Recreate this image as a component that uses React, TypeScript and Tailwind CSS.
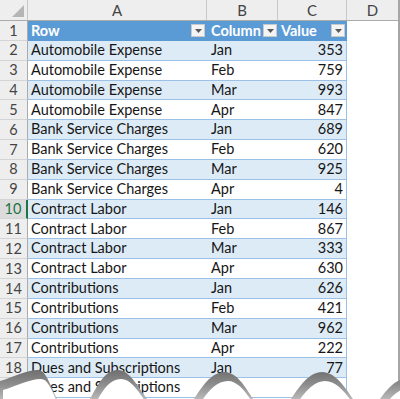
const rows: [string, string, number | null][] = [
  ["Automobile Expense", "Jan", 353],
  ["Automobile Expense", "Feb", 759],
  ["Automobile Expense", "Mar", 993],
  ["Automobile Expense", "Apr", 847],
  ["Bank Service Charges", "Jan", 689],
  ["Bank Service Charges", "Feb", 620],
  ["Bank Service Charges", "Mar", 925],
  ["Bank Service Charges", "Apr", 4],
  ["Contract Labor", "Jan", 146],
  ["Contract Labor", "Feb", 867],
  ["Contract Labor", "Mar", 333],
  ["Contract Labor", "Apr", 630],
  ["Contributions", "Jan", 626],
  ["Contributions", "Feb", 421],
  ["Contributions", "Mar", 962],
  ["Contributions", "Apr", 222],
  ["Dues and Subscriptions", "Jan", 77],
  ["Dues and Subscriptions", "Feb", null],
];

function FilterButton() {
  return (
    <span className="flex h-[13px] w-[14px] items-center justify-center border border-[#c9c9c9] bg-[#f4f4f4]">
      <svg width="7" height="4" viewBox="0 0 7 4">
        <path d="M0 0 L7 0 L3.5 4 Z" fill="#595959" />
      </svg>
    </span>
  );
}

function RowHeader({ n, active }: { n: number; active?: boolean }) {
  return (
    <div
      className={
        active
          ? "flex w-[28px] shrink-0 items-center justify-center border-r-2 border-b border-r-[#217346] border-b-[#d4d4d4] bg-[#dcdcdc] text-[#217346]"
          : "flex w-[28px] shrink-0 items-center justify-center border-r border-b border-r-[#ababab] border-b-[#d4d4d4] bg-[#eeeeee] text-[#444]"
      }
    >
      {n}
    </div>
  );
}

export default function App() {
  const wave =
    "M0,382 C14,378 26,371 38,371 C46,371 50,386 57,400 L90,400 C97,388 104,371 118,371 C129,371 137,386 147,400 L194,400 C202,388 211,373 225,373 C236,373 245,387 253,400 L291,400 C299,388 309,373 322,373 C335,373 345,388 353,400 L380,400 C387,390 393,384 400,381 L400,400 L0,400 Z";

  return (
    <div className="relative h-[399px] w-[400px] overflow-hidden bg-white font-['Lato',sans-serif] text-[14.5px] text-[#161616]">
      <div className="border-r-2 border-[#a6a6a6]">
        {/* column letters */}
        <div className="flex h-[21px] border-b border-[#ababab] bg-[#eeeeee] text-[15px] text-[#444]">
          <div className="relative w-[28px] shrink-0 border-r border-[#c8c8c8]">
            <svg className="absolute right-[3px] bottom-[3px]" width="12" height="12" viewBox="0 0 12 12">
              <path d="M12 0 L12 12 L0 12 Z" fill="#b5b5b5" />
            </svg>
          </div>
          <div className="flex w-[179px] shrink-0 items-center justify-center border-r border-[#c8c8c8]">A</div>
          <div className="flex w-[71px] shrink-0 items-center justify-center border-r border-[#c8c8c8]">B</div>
          <div className="flex w-[69px] shrink-0 items-center justify-center border-r border-[#c8c8c8]">C</div>
          <div className="flex flex-1 items-center justify-center">D</div>
        </div>

        {/* table header row */}
        <div className="flex h-[19.85px]">
          <RowHeader n={1} />
          <div className="flex w-[319px] shrink-0 bg-[#5b9bd5] font-bold text-white">
            <div className="flex w-[179px] shrink-0 items-center justify-between pr-[2px] pl-[3px]">
              <span>Row</span>
              <FilterButton />
            </div>
            <div className="flex w-[71px] shrink-0 items-center justify-between pr-[1px] pl-[4px]">
              <span>Column</span>
              <FilterButton />
            </div>
            <div className="flex w-[69px] shrink-0 items-center justify-between pr-[2px] pl-[3px]">
              <span>Value</span>
              <FilterButton />
            </div>
          </div>
          <div className="flex-1" />
        </div>

        {rows.map(([name, month, value], i) => {
          const n = i + 2;
          const banded = n % 2 === 0;
          return (
            <div key={n} className="flex h-[19.85px]">
              <RowHeader n={n} active={n === 10} />
              <div
                className={
                  banded
                    ? "flex w-[319px] shrink-0 border-r border-b border-[#9bc2e6] bg-[#ddebf7]"
                    : "flex w-[319px] shrink-0 border-r border-b border-[#9bc2e6] bg-white"
                }
              >
                <div className="flex w-[179px] shrink-0 items-center pl-[3px] leading-none">{name}</div>
                <div className="flex w-[71px] shrink-0 items-center pl-[4px] leading-none">{month}</div>
                <div className="flex flex-1 items-center justify-end pr-[3px] leading-none">{value}</div>
              </div>
              <div className="flex-1" />
            </div>
          );
        })}
      </div>

      {/* torn paper edge */}
      <svg className="absolute bottom-0 left-0" width="400" height="40" viewBox="0 360 400 40">
        <defs>
          <linearGradient id="tear" x1="0" y1="0" x2="0" y2="1">
            <stop offset="0" stopColor="#6f6f6f" />
            <stop offset="0.5" stopColor="#8d8d8d" />
            <stop offset="1" stopColor="#b8b8b8" />
          </linearGradient>
        </defs>
        <path d={wave} fill="url(#tear)" />
        <path d={wave} fill="#ffffff" transform="translate(3 9)" />
      </svg>
    </div>
  );
}
